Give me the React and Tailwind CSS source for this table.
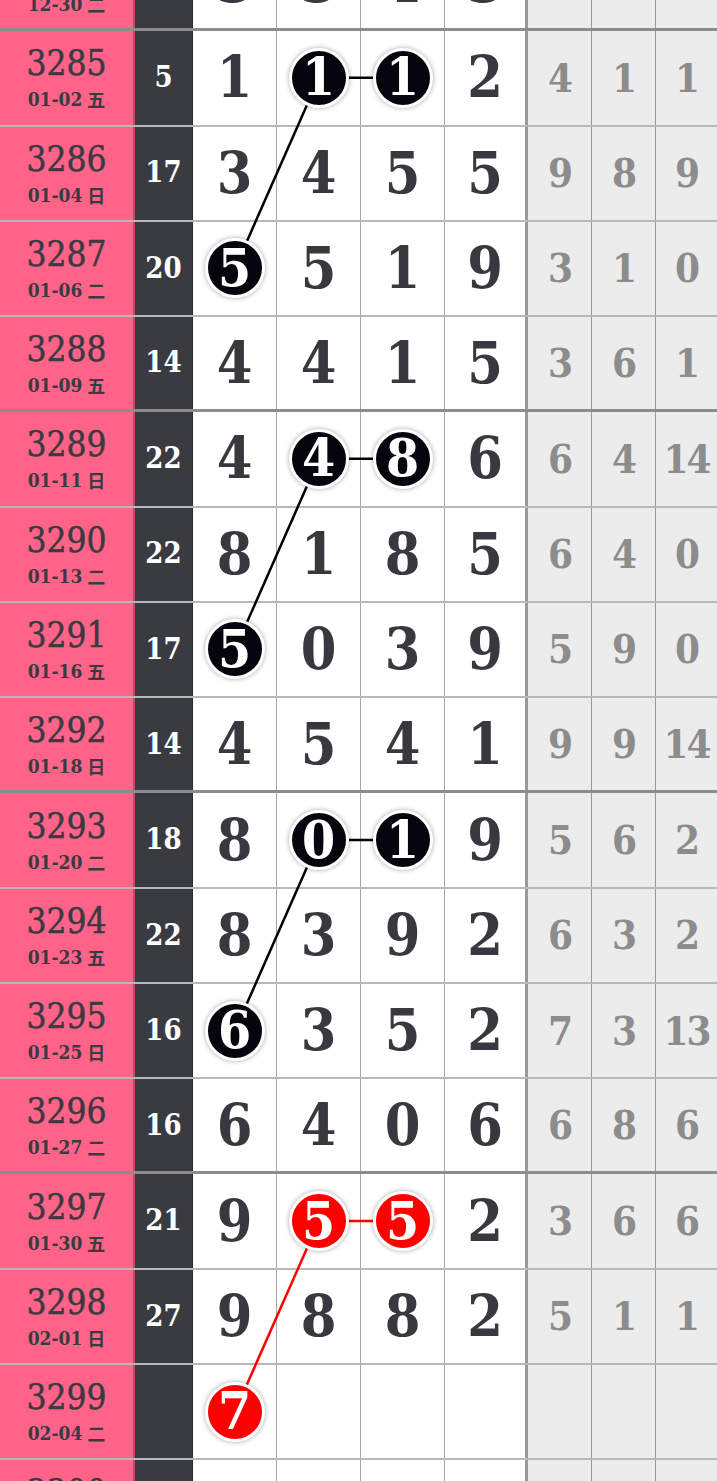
import React from 'react';

const ROW_H = 95.27;
const COL_X = [235, 319, 403, 486];

// k = black ball, r = red ball
const rows = [
    { no: '3284', date: '12-30', wd: '二', sum: '', d: ['3', '3', '4', '3'], g: ['', '', ''] },
    { no: '3285', date: '01-02', wd: '五', sum: '5', d: ['1', '1', '1', '2'], g: ['4', '1', '1'], ball: { 1: 'k', 2: 'k' } },
    { no: '3286', date: '01-04', wd: '日', sum: '17', d: ['3', '4', '5', '5'], g: ['9', '8', '9'] },
    { no: '3287', date: '01-06', wd: '二', sum: '20', d: ['5', '5', '1', '9'], g: ['3', '1', '0'], ball: { 0: 'k' } },
    { no: '3288', date: '01-09', wd: '五', sum: '14', d: ['4', '4', '1', '5'], g: ['3', '6', '1'], group: true },
    { no: '3289', date: '01-11', wd: '日', sum: '22', d: ['4', '4', '8', '6'], g: ['6', '4', '14'], ball: { 1: 'k', 2: 'k' } },
    { no: '3290', date: '01-13', wd: '二', sum: '22', d: ['8', '1', '8', '5'], g: ['6', '4', '0'] },
    { no: '3291', date: '01-16', wd: '五', sum: '17', d: ['5', '0', '3', '9'], g: ['5', '9', '0'], ball: { 0: 'k' } },
    { no: '3292', date: '01-18', wd: '日', sum: '14', d: ['4', '5', '4', '1'], g: ['9', '9', '14'], group: true },
    { no: '3293', date: '01-20', wd: '二', sum: '18', d: ['8', '0', '1', '9'], g: ['5', '6', '2'], ball: { 1: 'k', 2: 'k' } },
    { no: '3294', date: '01-23', wd: '五', sum: '22', d: ['8', '3', '9', '2'], g: ['6', '3', '2'] },
    { no: '3295', date: '01-25', wd: '日', sum: '16', d: ['6', '3', '5', '2'], g: ['7', '3', '13'], ball: { 0: 'k' } },
    { no: '3296', date: '01-27', wd: '二', sum: '16', d: ['6', '4', '0', '6'], g: ['6', '8', '6'], group: true },
    { no: '3297', date: '01-30', wd: '五', sum: '21', d: ['9', '5', '5', '2'], g: ['3', '6', '6'], ball: { 1: 'r', 2: 'r' } },
    { no: '3298', date: '02-01', wd: '日', sum: '27', d: ['9', '8', '8', '2'], g: ['5', '1', '1'] },
    { no: '3299', date: '02-04', wd: '二', sum: '', d: ['7', '', '', ''], g: ['', '', ''], ball: { 0: 'r' } },
    { no: '3300', date: '02-06', wd: '四', sum: '', d: ['', '', '', ''], g: ['', '', ''] },
];
rows[0].group = true;

const links = [
    { a: [1, 1], b: [1, 2], c: '#000' },
    { a: [1, 1], b: [3, 0], c: '#000' },
    { a: [5, 1], b: [5, 2], c: '#000' },
    { a: [5, 1], b: [7, 0], c: '#000' },
    { a: [9, 1], b: [9, 2], c: '#000' },
    { a: [9, 1], b: [11, 0], c: '#000' },
    { a: [13, 1], b: [13, 2], c: '#f00' },
    { a: [13, 1], b: [15, 0], c: '#f00' },
];

const cy = (i) => i * ROW_H + 46.5;

function Ball({ value, color }) {
    return (
        <div
            className={`relative z-10 flex h-[60px] w-[60px] items-center justify-center rounded-full border-[3px] border-white shadow-[0_0_5px_rgba(0,0,0,0.35)] text-[53px] font-bold leading-none text-white ${color === 'r' ? 'bg-[#ff0000]' : 'bg-[#05050d]'}`}
        >
            <span className="-mt-[2px]">{value}</span>
        </div>
    );
}

function Row({ row }) {
    const line = row.group ? 'border-b-[3px] border-b-[rgba(0,0,0,0.45)]' : 'border-b-2 border-b-[rgba(0,0,0,0.28)]';
    return (
        <div className={`grid h-[95.27px] grid-cols-[135px_58px_84px_84px_84px_83px_64px_64px_61px] ${line}`}>
            <div className="flex flex-col items-center justify-center gap-[5px] border-r-2 border-r-[rgba(0,0,0,0.25)] bg-[#ff6488] text-[#3a3a42]">
                <div className="text-[35px] leading-[38px] [-webkit-text-stroke:0.5px_#3a3a42]">{row.no}</div>
                <div className="flex items-center gap-[5px] text-[19px] font-bold leading-[24px]">
                    <span>{row.date}</span>
                    <span className="font-['Noto_Sans_CJK_SC',sans-serif] text-[18px]">{row.wd}</span>
                </div>
            </div>
            <div className="flex items-center justify-center border-r border-r-[rgba(0,0,0,0.3)] bg-[#3a3a41] text-[29px] font-bold text-white">
                {row.sum}
            </div>
            {row.d.map((v, i) => (
                <div
                    key={i}
                    className={`flex items-center justify-center bg-white text-[57px] font-bold leading-none text-[#38383f] ${i === 3 ? 'border-r-[3px] border-r-[rgba(0,0,0,0.4)]' : 'border-r border-r-[rgba(0,0,0,0.35)]'}`}
                >
                    {row.ball && row.ball[i] ? <Ball value={v} color={row.ball[i]} /> : <span className="-mt-[2px]">{v}</span>}
                </div>
            ))}
            {row.g.map((v, i) => (
                <div
                    key={i}
                    className={`flex items-center justify-center bg-[#ececec] text-[40px] font-bold leading-none tracking-[-2px] text-[#8c8c8c] ${i < 2 ? 'border-r border-r-[rgba(0,0,0,0.35)]' : ''}`}
                >
                    {v}
                </div>
            ))}
        </div>
    );
}

export default function App() {
    return (
        <div className="h-[1481px] w-[717px] overflow-hidden bg-white font-['DejaVu_Serif_Condensed','DejaVu_Serif','Noto_Sans_CJK_SC',serif]">
            <div className="relative -mt-[64px]">
                <svg className="pointer-events-none absolute left-0 top-0" width="717" height={ROW_H * rows.length}>
                    {links.map((l, i) => (
                        <line
                            key={i}
                            x1={COL_X[l.a[1]]}
                            y1={cy(l.a[0])}
                            x2={COL_X[l.b[1]]}
                            y2={cy(l.b[0])}
                            stroke={l.c}
                            strokeWidth="2.5"
                        />
                    ))}
                </svg>
                {rows.map((row) => (
                    <Row key={row.no} row={row} />
                ))}
            </div>
        </div>
    );
}
